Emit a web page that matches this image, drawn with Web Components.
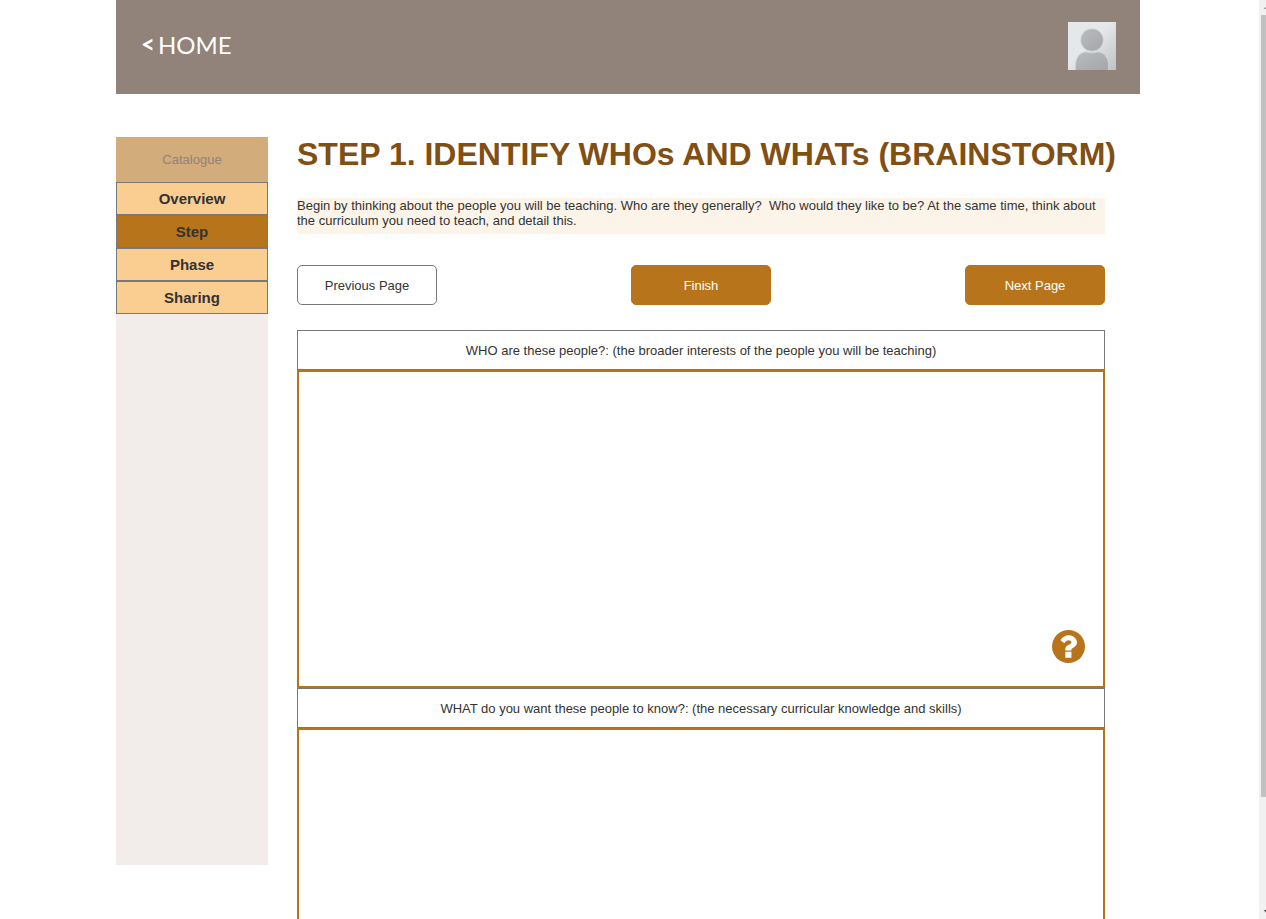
<!DOCTYPE html>
<html lang="en">
<head>
<meta charset="utf-8">
<meta name="viewport" content="width=device-width, initial-scale=1">
<title>Step 1. Identify WHOs and WHATs</title>
<style>
html, body { margin: 0; height: 100%; background: #fff; }
body { font: 13px/15px "Liberation Sans", Arial, sans-serif; color: #333;
  --brown: #b8741a; --taupe: #91827a; --line: #797979; }
</style>
</head>
<body>
<app-shell>
  <site-header></site-header>
  <div class="columns">
    <side-nav>
      <nav-item>Overview</nav-item>
      <nav-item current>Step</nav-item>
      <nav-item>Phase</nav-item>
      <nav-item>Sharing</nav-item>
    </side-nav>
    <step-page>
      <span slot="title">STEP 1. IDENTIFY WHOs AND WHATs (BRAINSTORM)</span>
      <span slot="intro">Begin by thinking about the people you will be teaching. Who are they generally?&nbsp; Who would they like to be? At the same time, think about the curriculum you need to teach, and detail this.</span>
      <page-button slot="actions" plain>Previous Page</page-button>
      <page-button slot="actions">Finish</page-button>
      <page-button slot="actions">Next Page</page-button>
      <note-field help>WHO are these people?: (the broader interests of the people you will be teaching)</note-field>
      <note-field>WHAT do you want these people to know?: (the necessary curricular knowledge and skills)</note-field>
    </step-page>
  </div>
</app-shell>
<script>
const define = (name, markup) => {
  const template = document.createElement('template');
  template.innerHTML = markup;
  customElements.define(name, class extends HTMLElement {
    constructor() {
      super();
      this.attachShadow({ mode: 'open' }).append(template.content.cloneNode(true));
    }
  });
};

define('scroll-track', `
<style>
:host { display: flex; flex-direction: column; width: 7px; overflow: hidden; background: #f1f1f1; }
svg { display: block; flex: none; width: 17px; height: 15px; }
.track { flex: 1; padding-left: 2px; }
.thumb { height: 88%; background: #c1c1c1; }
</style>
<svg viewBox="0 0 17 15" aria-hidden="true"><path d="M4.500 9L8.500 5L12.500 9z" fill="#a3a3a3"/></svg>
<div class="track"><div class="thumb"></div></div>
<svg viewBox="0 0 17 15" aria-hidden="true"><path d="M4.500 6L8.500 10L12.500 6z" fill="#505050"/></svg>`);

define('app-shell', `
<style>
:host { display: flex; height: 100vh; overflow: hidden; }
.view { flex: 1; min-width: 0; overflow-y: auto; scrollbar-width: none; padding-right: 3px; }
.page { max-width: 1024px; margin: 0 auto; }
::slotted(.columns) { display: flex; align-items: flex-start; gap: 29px; padding: 43px 35px 40px 0; }
</style>
<div class="view"><div class="page"><slot></slot></div></div>
<scroll-track></scroll-track>`);

define('site-header', `
<style>
:host { display: block; background: var(--taupe); color: #fff; }
header { display: flex; align-items: center; justify-content: space-between; height: 94px; padding: 0 24px; box-sizing: border-box; }
a { display: flex; gap: 3px; margin-bottom: 4px; padding-left: 1px; color: inherit; text-decoration: none; font: 24px/30px Lato, sans-serif; }
.arrow { font-weight: 700; line-height: 28px; }
.avatar { width: 48px; height: 48px; margin-bottom: 2px; }
</style>
<header>
  <a href="#home"><span class="arrow">&lt;</span> <span>HOME</span></a>
  <svg class="avatar" viewBox="0 0 48 48" role="img" aria-label="Profile picture">
    <defs>
      <linearGradient id="bg" x1="0" y1="0" x2="1" y2="1"><stop offset=".45" stop-color="#e4e8e9"/><stop offset="1" stop-color="#c0c2c4"/></linearGradient>
      <linearGradient id="fg" x1="0" y1="0" x2="1" y2="1"><stop offset="0" stop-color="#b9bcbe"/><stop offset="1" stop-color="#a4a6aa"/></linearGradient>
    </defs>
    <path fill="url(#bg)" d="M0 0h48v48H0z"/>
    <g fill="url(#fg)" stroke="#d3d6d8" stroke-width=".8">
      <circle cx="24" cy="18" r="11.300"/>
      <path d="M7.500 48.500V43C7.500 35.500 12 30.500 18 29.800C22 31.200 26 31.200 30 29.800C36 30.500 40.500 35.500 40.500 43V48.500z"/>
    </g>
  </svg>
</header>`);

define('side-nav', `
<style>
:host { display: block; flex: none; width: 152px; min-height: 728px; background: #f2edeb; }
.head { background: #d2ac7a; color: var(--taupe); text-align: center; line-height: 45px; }
</style>
<nav aria-label="Catalogue"><div class="head">Catalogue</div><slot></slot></nav>`);

define('nav-item', `
<style>
:host { display: block; }
a { display: block; box-sizing: border-box; height: 33px; border: 1px solid var(--line); background: #facd91;
  color: inherit; text-decoration: none; text-align: center; font-weight: bold; font-size: 15px; line-height: 31px; }
:host([current]) a { background: var(--brown); }
</style>
<a href="#section"><slot></slot></a>`);

define('page-button', `
<style>
:host { display: block; }
button { width: 140px; height: 40px; padding: 0; border: 1px solid var(--brown); border-radius: 5px; background: var(--brown); color: #fff; font: inherit; }
:host([plain]) button { background: #fff; border-color: var(--line); color: inherit; }
</style>
<button type="button"><slot></slot></button>`);

define('note-field', `
<style>
:host { display: block; position: relative; }
label { display: block; box-sizing: border-box; height: 40px; border: 1px solid var(--line); text-align: center; line-height: 40px; }
textarea { display: block; box-sizing: border-box; width: 100%; height: 318px; margin: 0; padding: 8px; border: 2px solid var(--brown); border-radius: 0; resize: none; outline: 0; background: #fff; font: inherit; color: inherit; }
button { display: none; position: absolute; right: 20px; bottom: 25px; width: 33px; height: 33px; padding: 0; border: 0; background: none; }
:host([help]) button { display: block; }
svg { display: block; width: 33px; height: 33px; }
</style>
<label for="note"><slot></slot></label>
<textarea id="note"></textarea>
<button type="button" aria-label="Help"><svg viewBox="8 8 496 496" aria-hidden="true">
  <circle cx="256" cy="256" r="248" fill="#b8741a"/>
  <path fill="#fff" d="M262.655 86c-54.497 0-92.255 24.957-122.549 67.758-3.536 5.286-2.353 12.415 2.715 16.258l40.699 30.310c5.205 3.947 12.621 3.008 16.665-2.122 17.864-22.658 30.113-37.797 57.303-37.797 20.429 0 42.698 13.148 42.698 32.958 0 14.976-12.363 22.667-32.534 33.976C247.128 238.528 208 254.941 208 296v20h92v-13.333c0-28.462 83.186-33.647 83.186-110.667 0-58.002-62.165-106-120.531-106zM208 334h92v92h-92z"/>
</svg></button>`);

define('step-page', `
<style>
:host { display: block; flex: 1; min-width: 0; }
h1 { margin: 0 0 27px; font-size: 32px; line-height: 34px; white-space: nowrap; color: #7f4f13; }
p { margin: 0 0 31px; min-height: 36px; background: #fdf4e9; }
.actions { display: flex; justify-content: space-between; margin-bottom: 25px; }
</style>
<main>
<h1><slot name="title"></slot></h1>
<p><slot name="intro"></slot></p>
<div class="actions"><slot name="actions"></slot></div>
<slot></slot>
</main>`);
</script>
</body>
</html>
